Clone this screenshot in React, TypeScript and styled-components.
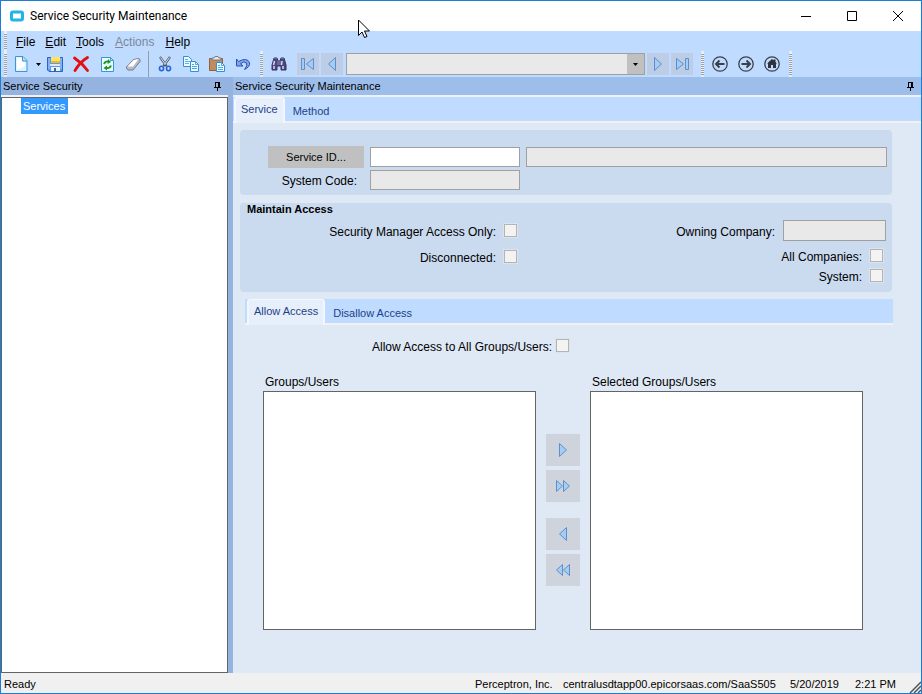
import React from "react";
import styled, { createGlobalStyle, css } from "styled-components";

const color = {
  frame: "#1a7fd4",
  bar: "#bfdbff",
  caption: "#95b3e1",
  captionActive: "#9dbdea",
  page: "#dfe8f5",
  group: "#cadaef",
  field: "#e9e9e9",
  fieldBorder: "#a0a0a0",
  listBorder: "#646464",
  tabText: "#1e3f8a",
  status: "#f0f0f0",
};

const GlobalStyle = createGlobalStyle`
  *, *::before, *::after { box-sizing: border-box; }
  body {
    margin: 0;
    color: #000;
    font: 12px/16px "Liberation Sans", Arial, sans-serif;
  }
  button, input, select { font: inherit; color: inherit; margin: 0; padding: 0; border-radius: 0; }
  svg { display: block; }
`;

const Window = styled.div`
  display: flex;
  flex-direction: column;
  min-height: 100vh;
  border: 1px solid ${color.frame};
  background: ${color.page};
`;

const TitleBar = styled.header`
  display: flex;
  align-items: center;
  height: 30px;
  padding-left: 8px;
  background: #fff;
`;

const Title = styled.h1`
  flex: 1;
  margin: 0 0 0 5px;
  font: 12px/16px Roboto, "Open Sans", sans-serif;
`;

const CaptionButton = styled.button`
  display: grid;
  place-items: center;
  width: 46px;
  height: 30px;
  border: 0;
  background: none;
`;

const Bars = styled.div`
  padding-left: 3px;
  background: ${color.bar};
`;

const MenuBar = styled.nav`
  display: flex;
  align-items: center;
  height: 20px;
`;

const Menus = styled.div`
  display: flex;
  padding-left: 3px;
`;

const MenuItem = styled.button`
  padding: 2px 5px 0;
  border: 0;
  background: none;
  &:disabled { padding: 2px 6px 0; color: #7e8797; }
`;

const ToolBar = styled.div`
  display: flex;
  align-items: center;
  height: 26px;
`;

const Grip = styled.span<{ $start?: boolean }>`
  align-self: stretch;
  width: 3px;
  margin: 0 ${(p) => (p.$start ? 1 : 3)}px 0 ${(p) => (p.$start ? 0 : 4)}px;
  background: repeating-linear-gradient(#eef1f6 0 1px, #98a0ac 1px 2px);
  border-block: 2px solid #e8edf5;
`;

const Divider = styled.span`
  align-self: stretch;
  width: 1px;
  margin: 0 3px 0 2px;
  background: #9a9ca3;
`;

const ToolButton = styled.button`
  display: grid;
  place-items: center;
  width: 26px;
  height: 24px;
  border: 0;
  background: none;
`;

const DropButton = styled(ToolButton)`
  width: 8px;
`;

const Stepper = styled.div`
  display: flex;
  gap: 2px;
  margin: 0 4px 0 5px;
`;

const StepButton = styled(ToolButton)`
  width: 22px;
  height: 22px;
  background: #bccde5;
`;

const Combo = styled.div`
  position: relative;
  width: 299px;
  height: 22px;
  margin-left: 1px;
`;

const ComboSelect = styled.select`
  display: block;
  appearance: none;
  width: 100%;
  height: 100%;
  border: 1px solid ${color.fieldBorder};
  background: ${color.field};
  opacity: 1;
`;

const ComboArrow = styled.span`
  position: absolute;
  inset: 1px 1px 1px auto;
  display: grid;
  place-items: center;
  width: 17px;
  background: #c0c0c0;
  pointer-events: none;
`;

const Workspace = styled.div`
  display: flex;
  flex: 1;
`;

const Sidebar = styled.aside`
  display: flex;
  flex-direction: column;
  flex: 0 0 232px;
  background: ${color.caption};
`;

const Main = styled.main`
  display: flex;
  flex-direction: column;
  flex: 1;
  min-width: 0;
`;

const PaneCaption = styled.div<{ $active?: boolean }>`
  display: flex;
  align-items: center;
  justify-content: space-between;
  height: 18px;
  padding: 0 7px 0 2px;
  font-size: 11px;
  background: ${(p) => (p.$active ? color.captionActive : color.caption)};
`;

const PaneTitle = styled.h2`
  margin: 0;
  font-size: inherit;
  font-weight: normal;
`;

const PinButton = styled.button`
  border: 0;
  background: none;
`;

const SidePane = styled.div`
  display: flex;
  flex-direction: column;
  flex: 1;
  margin-right: 5px;
`;

const Tree = styled.ul`
  flex: 1;
  margin: 0;
  padding: 0 0 0 19px;
  list-style: none;
  font-size: 11px;
  border: 1px solid ${color.listBorder};
  background: #fff;
`;

const TreeFrame = styled.div`
  display: flex;
  flex: 1;
  border-top: 2px solid #eef2f8;
`;

const TreeItem = styled.li`
  width: fit-content;
  padding: 0 3px 0 2px;
  color: #fff;
  background: #3399ff;
`;

const TabStrip = styled.div<{ $top?: boolean }>`
  display: flex;
  height: ${(p) => (p.$top ? 28 : 26)}px;
  padding-left: ${(p) => (p.$top ? 1 : 2)}px;
  border-top: ${(p) => (p.$top ? 2 : 0)}px solid #eef2f8;
  border-bottom: 2px solid #f0f2f5;
  background: ${color.bar};
`;

const Tab = styled.button<{ $selected?: boolean }>`
  height: 26px;
  padding: 2px 8px 1px;
  border: 0;
  font-size: 11px;
  color: ${color.tabText};
  background: none;
  ${(p) =>
    p.$selected &&
    css`
      padding: 0 5px 4px;
      border: 1px solid #f2f7fd;
      border-width: 1px 2px 0;
      border-radius: 3px 3px 0 0;
      background: #e7effa;
    `}
`;

const Form = styled.div`
  display: flex;
  flex-direction: column;
  flex: 1;
  gap: 7px;
  padding: 7px 28px 43px 7px;
`;

const Group = styled.section`
  border-radius: 4px;
  margin-right: 1px;
  background: ${color.group};
`;

const Lookup = styled(Group)`
  display: grid;
  grid-template-columns: 96px 150px 1fr;
  gap: 2px 6px;
  align-items: center;
  margin-bottom: 1px;
  padding: 16px 5px 5px 28px;
`;

const LookupButton = styled.button`
  height: 22px;
  border: 0;
  font-size: 11px;
  background: #c0c0c0;
`;

const TextField = styled.input`
  width: 100%;
  height: 20px;
  padding: 0 3px;
  border: 1px solid ${color.fieldBorder};
  background: #fff;
  &:read-only { background: ${color.field}; }
`;

const LookupLabel = styled.label`
  padding: 2px 7px 0 0;
  text-align: right;
`;

const Access = styled(Group)`
  padding: 0 6px 7px 7px;
`;

const GroupTitle = styled.h3`
  margin: 0;
  font-size: 11px;
  line-height: 13px;
`;

const Options = styled.div`
  display: flex;
  justify-content: space-between;
  padding-top: 1px;
`;

const OptionColumn = styled.div<{ $wide?: boolean }>`
  display: flex;
  flex-direction: column;
  align-items: flex-end;
  flex: 0 0 ${(p) => (p.$wide ? "270px" : "auto")};
`;

const Option = styled.div<{ $tall?: boolean }>`
  display: flex;
  align-items: center;
  gap: 8px;
  height: ${(p) => (p.$tall ? 26 : 20)}px;
`;

const OptionLabel = styled.label`
  padding-top: 3px;
`;

const CompanyOption = styled(Option)`
  margin-bottom: 2px;
`;

const CompanyField = styled(TextField)`
  width: 103px;
  height: 21px;
`;

const CheckBox = styled.input`
  appearance: none;
  width: 13px;
  height: 13px;
  border: 1px solid #b4b4b4;
  outline: 1px solid #dde3ea;
  background: #f3f3f3;
`;

const FlagOption = styled(Option)`
  margin-right: 3px;
`;

const AccessTabs = styled.section`
  display: flex;
  flex-direction: column;
  flex: 1;
  margin-left: 5px;
`;

const AllUsers = styled.div`
  display: flex;
  align-items: center;
  gap: 4px;
  padding: 11px 0 18px 127px;
`;

const Transfer = styled.div`
  display: grid;
  grid-template-columns: 1fr 34px 1fr;
  column-gap: 10px;
  flex: 1;
  padding: 0 30px 0 18px;
`;

const ListColumn = styled.div`
  display: flex;
  flex-direction: column;
`;

const ListLabel = styled.label`
  height: 18px;
  padding: 1px 2px 0;
`;

const ListBox = styled.select`
  flex: 1;
  width: 100%;
  min-height: 200px;
  border: 1px solid ${color.listBorder};
  background: #fff;
`;

const Movers = styled.div`
  display: flex;
  flex-direction: column;
  gap: 16px;
  padding-top: 61px;
`;

const MoverPair = styled.div`
  display: grid;
  gap: 4px;
`;

const MoveButton = styled.button`
  display: grid;
  place-items: center;
  height: 32px;
  border: 0;
  background: #cfd4dc;
`;

const StatusBar = styled.footer`
  display: grid;
  grid-template-columns: 1fr 88px 227px 65px 54px 12px;
  align-items: center;
  height: 20px;
  padding-left: 3px;
  font-size: 11px;
  white-space: nowrap;
  background: ${color.status};
`;

const StatusText = styled.span`
  padding-top: 2px;
`;

const SizeGrip = styled.span`
  align-self: end;
`;

const Pointer = styled.svg`
  position: absolute;
  left: 358px;
  top: 19px;
  pointer-events: none;
`;

const Pin = () => (
  <svg width="7" height="9" viewBox="0 0 7 9" shapeRendering="crispEdges">
    <path d="M1 0h5v5h1v1H4v3H3V6H0V5h1zM2 1v4h2V1z" fill="#000" fillRule="evenodd" />
  </svg>
);

const Icon = ({ children }: { children: React.ReactNode }) => (
  <svg width="16" height="16" viewBox="0 0 16 16" aria-hidden="true">
    {children}
  </svg>
);

const NewIcon = () => (
  <Icon>
    <path d="M2.500 .500h7.500l4 4v11H2.500z" fill="#dff3ff" stroke="#3995d8" />
    <path d="M4 2h5v4h3v4L4 14z" fill="#fff" />
    <path d="M9.500 1v4H14" fill="#b5e1fa" stroke="#3995d8" />
  </Icon>
);

const SaveIcon = () => (
  <Icon>
    <path d="M.500 1.500h15v14H2L.500 14z" fill="#5f97ef" stroke="#2565d0" />
    <path d="M2 2v11M14 2v11" stroke="#a8c8fa" />
    <path d="M4 1h9v6H4z" fill="#ffe45c" />
    <path d="M4 5h9v2H4z" fill="#f2b923" />
    <path d="M3 8h10v2H3z" fill="#d9e8fc" />
    <path d="M4 11h9v4H4z" fill="#eef1f5" />
    <path d="M7 12h2v3H7z" fill="#59616e" />
  </Icon>
);

const DeleteIcon = () => (
  <Icon>
    <path d="M1.500 2Q9 7 14.500 14.500M14.500 1.500Q7 6 2 14.500" fill="none" stroke="#e30f13" strokeWidth="2.800" strokeLinecap="round" />
  </Icon>
);

const RefreshIcon = () => (
  <Icon>
    <path d="M2.500 1.500h9l3 3v11h-12z" fill="#effaff" stroke="#3995d8" />
    <path d="M11.500 2v2.500H14" fill="#bde6fc" stroke="#3995d8" />
    <path d="M5 8q1-3 5-2.500M12 9.500q-1 3-5 2.500" fill="none" stroke="#119b22" strokeWidth="1.800" />
    <path d="M9 3l3 3-3.500 2zM8 9.500l-3.500 2.500 3.500 2.500z" fill="#119b22" />
  </Icon>
);

const EraserIcon = () => (
  <Icon>
    <path d="M8.500 3.500l5-1 1.500 1v2L8 14H3L1.500 12.500V11z" fill="#b9bdc6" stroke="#747b8a" />
    <path d="M8.500 4l5-1-5.500 7.500H2.500z" fill="#fff" />
  </Icon>
);

const CutIcon = () => (
  <Icon>
    <path d="M3 1l6.500 9M13 1L6.500 10" stroke="#4d5566" strokeWidth="2.200" />
    <path d="M3.500 1.500l5 7M12.500 1.500l-5 7" stroke="#e6eaf0" strokeWidth="1" />
    <ellipse cx="4.500" cy="12.500" rx="2" ry="2.200" fill="none" stroke="#2a62d6" strokeWidth="1.600" />
    <ellipse cx="11.500" cy="12.500" rx="2" ry="2.200" fill="none" stroke="#2a62d6" strokeWidth="1.600" />
  </Icon>
);

const CopyIcon = () => (
  <Icon>
    <path d="M.500 .500h5l3 3v7h-8z" fill="#effaff" stroke="#2f91dc" />
    <path d="M2 3.500h3M2 5.500h5M2 7.500h4" stroke="#62afe8" />
    <path d="M7.500 5.500h5l3 3v7h-8z" fill="#effaff" stroke="#2f91dc" />
    <path d="M12.500 6v2.500H15M9 8.500h2M9 10.500h5M9 12.500h5" fill="none" stroke="#52a6e4" />
  </Icon>
);

const PasteIcon = () => (
  <Icon>
    <path d="M.500 2.500h13v12H.500z" fill="#c08c5c" stroke="#8d6040" />
    <path d="M3 4V2h2l1-1.500h3L10 2h2v2z" fill="#e6e8eb" stroke="#777a80" />
    <path d="M7.500 6.500h5l3 3v6h-8z" fill="#effaff" stroke="#2f91dc" />
    <path d="M12.500 7v2.500H15M9 9.500h2M9 11.500h5M9 13.500h5" fill="none" stroke="#52a6e4" />
  </Icon>
);

const UndoIcon = () => (
  <Icon>
    <path d="M1.500 3v7h6.500L5.500 7.700Q9 4.500 11.500 7q1.500 2.500-2 6.500 6-3 5-7Q12 1 3.500 5.500z" fill="#7fa4ec" stroke="#2c50b5" strokeLinejoin="round" />
  </Icon>
);

const FindIcon = () => (
  <Icon>
    <path d="M3 2h3l1 3h2l1-3h3l2 7v5h-5v-4H6v4H1V9z" fill="#4b4782" stroke="#37335f" />
    <path d="M3.500 5L2.500 9M11 5l-.500 4M3 10v3M12 10v3" stroke="#d9d8ef" strokeWidth="1.500" />
    <path d="M6 6h4M6 8h4M3 2h3M10 2h3" stroke="#8c87bd" />
  </Icon>
);

const Triangles = ({ d }: { d: string }) => (
  <Icon>
    <path d={d} fill="#a5cdf2" stroke="#5d8fd0" strokeLinejoin="round" />
  </Icon>
);

const Ring = ({ children }: { children: React.ReactNode }) => (
  <Icon>
    <circle cx="8" cy="8" r="7.200" fill="none" stroke="#3c4046" strokeWidth="1.300" />
    {children}
  </Icon>
);

const tools = [
  ["Save", SaveIcon],
  ["Delete", DeleteIcon],
  ["Refresh", RefreshIcon],
  ["Clear", EraserIcon],
] as const;

const edits = [
  ["Cut", CutIcon],
  ["Copy", CopyIcon],
  ["Paste", PasteIcon],
  ["Undo", UndoIcon],
] as const;

const shapes = {
  right: "M4.500 1.500v13l7-6.500z",
  left: "M11.500 1.500v13l-7-6.500z",
  first: "M1.500 2.500h3v11h-3zM13.500 2.500v11L6.500 8z",
  last: "M2.500 2.500v11L9.500 8zM11.500 2.500h3v11h-3z",
  allRight: "M1.500 2.500v11l6-5.500zM8.500 2.500v11l6-5.500z",
  allLeft: "M7.500 2.500v11l-6-5.500zM14.500 2.500v11l-6-5.500z",
};

const DownArrow = () => (
  <svg width="5" height="3" viewBox="0 0 5 3">
    <path d="M0 0h5L2.500 3z" fill="#000" />
  </svg>
);

const menus = ["File", "Edit", "Tools", "Actions", "Help"];

const Flag = ({ id, label, tall }: { id: string; label: string; tall?: boolean }) => {
  const Row = tall ? Option : FlagOption;
  return (
    <Row $tall={tall}>
      <OptionLabel htmlFor={id}>{label}</OptionLabel>
      <CheckBox id={id} type="checkbox" />
    </Row>
  );
};

export default function App() {
  return (
    <>
      <GlobalStyle />
      <Window>
        <TitleBar>
          <svg width="16" height="16" viewBox="0 0 16 16" aria-hidden="true">
            <rect x="2.500" y="4" width="11" height="8" rx="1.500" fill="#fff" stroke="#1fb6e6" strokeWidth="3" />
          </svg>
          <Title>Service Security Maintenance</Title>
          <CaptionButton aria-label="Minimize">
            <svg width="10" height="10"><path d="M0 5.500h10" stroke="#000" /></svg>
          </CaptionButton>
          <CaptionButton aria-label="Maximize">
            <svg width="10" height="10"><path d="M.500 .500h9v9h-9z" fill="none" stroke="#000" /></svg>
          </CaptionButton>
          <CaptionButton aria-label="Close">
            <svg width="10" height="10"><path d="M0 0l10 10M10 0L0 10" stroke="#000" /></svg>
          </CaptionButton>
        </TitleBar>

        <Bars>
          <MenuBar>
            <Grip $start />
            <Menus>
              {menus.map((m) => (
                <MenuItem key={m} disabled={m === "Actions"}>
                  <u>{m[0]}</u>
                  {m.slice(1)}
                </MenuItem>
              ))}
            </Menus>
          </MenuBar>
          <ToolBar>
            <Grip $start />
            <ToolButton aria-label="New"><NewIcon /></ToolButton>
            <DropButton aria-label="New options"><DownArrow /></DropButton>
            {tools.map(([name, Glyph]) => (
              <ToolButton key={name} aria-label={name}><Glyph /></ToolButton>
            ))}
            <Divider />
            {edits.map(([name, Glyph]) => (
              <ToolButton key={name} aria-label={name}><Glyph /></ToolButton>
            ))}
            <Grip />
            <ToolButton aria-label="Search"><FindIcon /></ToolButton>
            <Stepper>
              <StepButton aria-label="First"><Triangles d={shapes.first} /></StepButton>
              <StepButton aria-label="Previous"><Triangles d={shapes.left} /></StepButton>
              <Combo>
                <ComboSelect aria-label="Record" disabled />
                <ComboArrow><DownArrow /></ComboArrow>
              </Combo>
              <StepButton aria-label="Next"><Triangles d={shapes.right} /></StepButton>
              <StepButton aria-label="Last"><Triangles d={shapes.last} /></StepButton>
            </Stepper>
            <Grip />
            <ToolButton aria-label="Back">
              <Ring><path d="M12.500 8H4.500M7.500 4.500L4 8l3.500 3.500" fill="none" stroke="#3c4046" strokeWidth="2" /></Ring>
            </ToolButton>
            <ToolButton aria-label="Forward">
              <Ring><path d="M3.500 8h8M8.500 4.500L12 8l-3.500 3.500" fill="none" stroke="#3c4046" strokeWidth="2" /></Ring>
            </ToolButton>
            <ToolButton aria-label="Home">
              <Ring><path d="M3 7.500L8 3l1.500 1.300V3.500H11.500v2.500l1.500 1.500h-1V12H9V9H7v3H4V7.500z" fill="#30343a" /></Ring>
            </ToolButton>
            <Grip />
          </ToolBar>
        </Bars>

        <Workspace>
          <Sidebar>
            <SidePane>
              <PaneCaption>
                <PaneTitle>Service Security</PaneTitle>
                <PinButton aria-label="Pin Service Security"><Pin /></PinButton>
              </PaneCaption>
              <TreeFrame>
                <Tree role="tree">
                  <TreeItem role="treeitem" aria-selected="true">Services</TreeItem>
                </Tree>
              </TreeFrame>
            </SidePane>
          </Sidebar>

          <Main>
            <PaneCaption $active>
              <PaneTitle>Service Security Maintenance</PaneTitle>
              <PinButton aria-label="Pin Service Security Maintenance"><Pin /></PinButton>
            </PaneCaption>
            <TabStrip $top role="tablist">
              <Tab $selected role="tab" aria-selected="true">Service</Tab>
              <Tab role="tab" aria-selected="false">Method</Tab>
            </TabStrip>
            <Form>
              <Lookup>
                <LookupButton>Service ID...</LookupButton>
                <TextField aria-label="Service ID" />
                <TextField aria-label="Service description" readOnly />
                <LookupLabel htmlFor="system-code">System Code:</LookupLabel>
                <TextField id="system-code" readOnly />
              </Lookup>

              <Access>
                <GroupTitle>Maintain Access</GroupTitle>
                <Options>
                  <OptionColumn $wide>
                    <Flag tall id="manager-only" label="Security Manager Access Only:" />
                    <Flag tall id="disconnected" label="Disconnected:" />
                  </OptionColumn>
                  <OptionColumn>
                    <CompanyOption $tall>
                      <OptionLabel htmlFor="company">Owning Company:</OptionLabel>
                      <CompanyField id="company" readOnly />
                    </CompanyOption>
                    <Flag id="all-companies" label="All Companies:" />
                    <Flag id="system" label="System:" />
                  </OptionColumn>
                </Options>
              </Access>

              <AccessTabs>
                <TabStrip role="tablist">
                  <Tab $selected role="tab" aria-selected="true">Allow Access</Tab>
                  <Tab role="tab" aria-selected="false">Disallow Access</Tab>
                </TabStrip>
                <AllUsers>
                  <OptionLabel htmlFor="allow-all">Allow Access to All Groups/Users:</OptionLabel>
                  <CheckBox id="allow-all" type="checkbox" />
                </AllUsers>
                <Transfer>
                  <ListColumn>
                    <ListLabel htmlFor="available">Groups/Users</ListLabel>
                    <ListBox id="available" multiple />
                  </ListColumn>
                  <Movers>
                    <MoverPair>
                      <MoveButton aria-label="Add"><Triangles d={shapes.right} /></MoveButton>
                      <MoveButton aria-label="Add all"><Triangles d={shapes.allRight} /></MoveButton>
                    </MoverPair>
                    <MoverPair>
                      <MoveButton aria-label="Remove"><Triangles d={shapes.left} /></MoveButton>
                      <MoveButton aria-label="Remove all"><Triangles d={shapes.allLeft} /></MoveButton>
                    </MoverPair>
                  </Movers>
                  <ListColumn>
                    <ListLabel htmlFor="selected">Selected Groups/Users</ListLabel>
                    <ListBox id="selected" multiple />
                  </ListColumn>
                </Transfer>
              </AccessTabs>
            </Form>
          </Main>
        </Workspace>

        <StatusBar>
          <StatusText>Ready</StatusText>
          <StatusText>Perceptron, Inc.</StatusText>
          <StatusText>centralusdtapp00.epicorsaas.com/SaaS505</StatusText>
          <StatusText>5/20/2019</StatusText>
          <StatusText>2:21 PM</StatusText>
          <SizeGrip aria-hidden="true">
            <svg width="12" height="12"><path d="M1 12L12 1M5 12l7-7M9 12l3-3" stroke="#555" strokeWidth="1.500" /></svg>
          </SizeGrip>
        </StatusBar>
      </Window>
      <Pointer width="12" height="19" viewBox="0 0 12 19" aria-hidden="true">
        <path d="M.500 1v15.500L4 13l2.500 5.500 2.500-1-2.500-5.500h5z" fill="#fff" stroke="#000" />
      </Pointer>
    </>
  );
}
